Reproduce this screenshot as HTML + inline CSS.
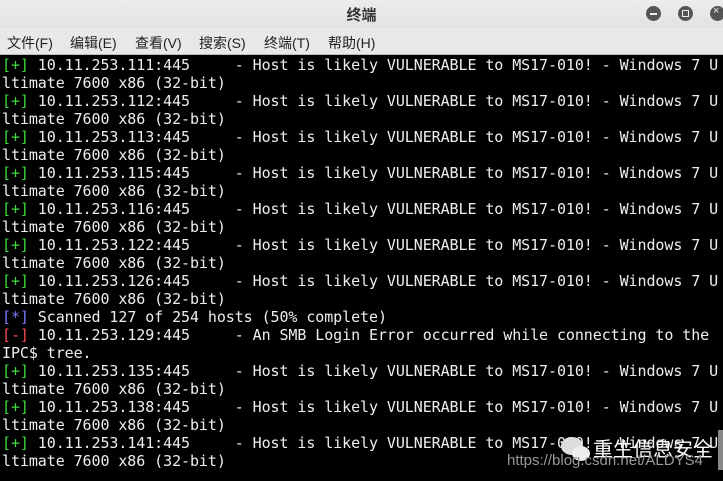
<!DOCTYPE html>
<html><head><meta charset="utf-8"><style>
html,body{margin:0;padding:0;width:723px;height:481px;overflow:hidden;background:#000}
#title{position:absolute;left:0;top:0;width:723px;height:28px;background:linear-gradient(#ececec,#e2e2e2);}
#title .t{position:absolute;left:0;width:723px;text-align:center;top:4px;font:bold 15px "Liberation Sans","Noto Sans CJK SC",sans-serif;color:#333}
.btn{position:absolute;top:6px;width:15px;height:15px;border-radius:50%;background:#555;}
#menu{position:absolute;left:0;top:28px;width:723px;height:26px;background:#e8e8e8;border-bottom:1px solid #bbb;font:14px "Liberation Sans","Noto Sans CJK SC",sans-serif;color:#222}
#menu span{position:absolute;top:5px}
#term{position:absolute;left:2px;top:56px;font:15px/18px "DejaVu Sans Mono",monospace;color:#eee;white-space:pre;letter-spacing:-0.08px}
.g{color:#3ddc3d}.b{color:#7a7aff}.r{color:#ff4b4b}
#sb{position:absolute;left:718px;top:430px;width:5px;height:40px;background:#888}
#wm{position:absolute;left:593px;top:433px;font:20px "Noto Sans CJK SC",sans-serif;color:#fff;white-space:nowrap}
#url{position:absolute;left:507px;top:452px;font:15px "Liberation Sans",sans-serif;color:#999}
</style></head><body>
<div id="title"><div class="t">终端</div>
<div class="btn" style="left:646px"><div style="position:absolute;left:4px;top:7px;width:7px;height:2px;background:#eee"></div></div>
<div class="btn" style="left:678px"><div style="position:absolute;left:4px;top:4px;width:5px;height:5px;border:1px solid #eee"></div></div>
<div class="btn" style="left:710px"><div style="position:absolute;left:3px;top:-1px;color:#eee;font:11px sans-serif">×</div></div>
</div>
<div id="menu"><span style="left:7px">文件(F)</span><span style="left:70px">编辑(E)</span><span style="left:135px">查看(V)</span><span style="left:199px">搜索(S)</span><span style="left:264px">终端(T)</span><span style="left:328px">帮助(H)</span></div>
<div id="term"><span class="g">[+]</span> 10.11.253.111:445     - Host is likely VULNERABLE to MS17-010! - Windows 7 U
ltimate 7600 x86 (32-bit)
<span class="g">[+]</span> 10.11.253.112:445     - Host is likely VULNERABLE to MS17-010! - Windows 7 U
ltimate 7600 x86 (32-bit)
<span class="g">[+]</span> 10.11.253.113:445     - Host is likely VULNERABLE to MS17-010! - Windows 7 U
ltimate 7600 x86 (32-bit)
<span class="g">[+]</span> 10.11.253.115:445     - Host is likely VULNERABLE to MS17-010! - Windows 7 U
ltimate 7600 x86 (32-bit)
<span class="g">[+]</span> 10.11.253.116:445     - Host is likely VULNERABLE to MS17-010! - Windows 7 U
ltimate 7600 x86 (32-bit)
<span class="g">[+]</span> 10.11.253.122:445     - Host is likely VULNERABLE to MS17-010! - Windows 7 U
ltimate 7600 x86 (32-bit)
<span class="g">[+]</span> 10.11.253.126:445     - Host is likely VULNERABLE to MS17-010! - Windows 7 U
ltimate 7600 x86 (32-bit)
<span class="b">[*]</span> Scanned 127 of 254 hosts (50% complete)
<span class="r">[-]</span> 10.11.253.129:445     - An SMB Login Error occurred while connecting to the
IPC$ tree.
<span class="g">[+]</span> 10.11.253.135:445     - Host is likely VULNERABLE to MS17-010! - Windows 7 U
ltimate 7600 x86 (32-bit)
<span class="g">[+]</span> 10.11.253.138:445     - Host is likely VULNERABLE to MS17-010! - Windows 7 U
ltimate 7600 x86 (32-bit)
<span class="g">[+]</span> 10.11.253.141:445     - Host is likely VULNERABLE to MS17-010! - Windows 7 U
ltimate 7600 x86 (32-bit)</div>
<div id="sb"></div>
<div style="position:absolute;left:561px;top:437px;width:22px;height:18px;border-radius:50%;background:#ddd"></div>
<div style="position:absolute;left:572px;top:446px;width:18px;height:15px;border-radius:50%;background:#eee"></div>
<div id="wm">重生信息安全</div>
<div id="url">https://blog.csdn.net/ALDYS4</div>
</body></html>
